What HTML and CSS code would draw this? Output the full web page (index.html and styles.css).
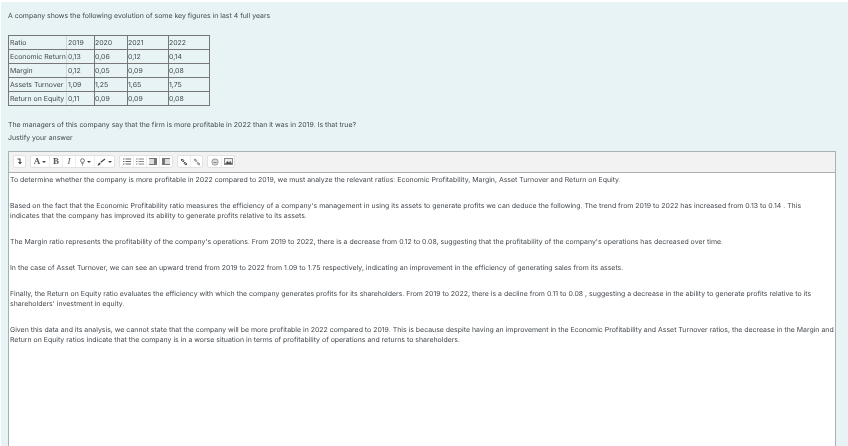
FILE: index.html
```html
<!DOCTYPE html>
<html lang="en">
    <head>
        <meta charset="UTF-8" />
        <title>Question</title>
        <link rel="stylesheet" href="styles.css">
    </head>
    <body>
        <div class="question">
            <p class="line intro">A company shows the following evolution of some key figures in last 4 full years</p>
            <table class="figures">
                <tr><td class="name">Ratio</td><td class="first">2019</td><td class="y20">2020</td><td class="y21">2021</td><td class="y22">2022</td></tr>
                <tr><td class="name">Economic Return</td><td class="first">0,13</td><td class="y20">0,06</td><td class="y21">0,12</td><td class="y22">0,14</td></tr>
                <tr><td class="name">Margin</td><td class="first">0,12</td><td class="y20">0,05</td><td class="y21">0,09</td><td class="y22">0,08</td></tr>
                <tr><td class="name">Assets Turnover</td><td class="first">1,09</td><td class="y20">1,25</td><td class="y21">1,65</td><td class="y22">1,75</td></tr>
                <tr><td class="name">Return on Equity</td><td class="first">0,11</td><td class="y20">0,09</td><td class="y21">0,09</td><td class="y22">0,08</td></tr>
            </table>
            <p class="line managers">The managers of this company say that the firm is more profitable in 2022 than it was in 2019. Is that true?</p>
            <p class="line justify">Justify your answer</p>
            <div class="editor">
                <div class="toolbar">
                    <div class="group">
                        <span class="tool solo"><svg width="5" height="7" viewBox="0 0 5 7"><path d="M.5 1H3v3.5" fill="none" stroke="#444" stroke-width="1.1"/><path d="M1 4h4L3 6.5z" fill="#444"/></svg></span>
                    </div>
                    <div class="group">
                        <span class="tool font"><b class="glyph">A</b><i class="caret"></i></span>
                        <span class="tool"><b class="glyph">B</b></span>
                        <span class="tool"><em class="glyph">I</em></span>
                        <span class="tool bulb"><svg width="5" height="8" viewBox="0 0 5 8"><circle cx="2.5" cy="2.6" r="1.9" fill="none" stroke="#666" stroke-width=".9"/><path d="M1.5 5.6h2M2 7h1" stroke="#666"/></svg><i class="caret"></i></span>
                        <span class="tool brush"><svg width="9" height="8" viewBox="0 0 9 8"><path d="M.5 7.500c1.500 0 2.800-.5 3-2L3 4.500c-1.500.3-1.800 1.600-2.500 3z" fill="#444"/><path d="M3.800 4.200L8 1" stroke="#444" stroke-width="1.300"/></svg><i class="caret"></i></span>
                    </div>
                    <div class="group">
                        <span class="tool"><svg width="8" height="7" viewBox="0 0 8 7"><path d="M0 1h1.500M0 3.500h1.500M0 6h1.500M2.500 1H8M2.500 3.500H8M2.500 6H8" stroke="#666"/></svg></span>
                        <span class="tool"><svg width="8" height="7" viewBox="0 0 8 7"><path d="M0 1h1.500M0 3.500h1.500M0 6h1.500M2.500 1H8M2.500 3.500H8M2.500 6H8" stroke="#888"/></svg></span>
                        <span class="tool"><svg width="8" height="7" viewBox="0 0 8 7"><path d="M0 0h8v7H0z" fill="#777"/><path d="M0 1h5v5H0z" fill="#ddd"/></svg></span>
                        <span class="tool"><svg width="8" height="7" viewBox="0 0 8 7"><path d="M0 0h8v7H0z" fill="#777"/><path d="M3 1h5v5H3z" fill="#ddd"/></svg></span>
                    </div>
                    <div class="group">
                        <span class="tool narrow"><svg width="8" height="8" viewBox="0 0 8 8"><path d="M1 2l1-1 2 1.500-1 1zM7 6L6 7 4 5.500l1-1z" fill="none" stroke="#555"/><path d="M3 3l2 2" stroke="#555"/></svg></span>
                        <span class="tool narrow"><svg width="8" height="8" viewBox="0 0 8 8"><path d="M1 2l1-1 2 1.500-1 1zM7 6L6 7 4 5.500l1-1z" fill="none" stroke="#999"/><path d="M1 .5l6 7" stroke="#888" stroke-width=".7"/></svg></span>
                    </div>
                    <div class="group">
                        <span class="tool"><svg width="8" height="8" viewBox="0 0 8 8"><circle cx="4" cy="4" r="3.500" fill="#999"/><circle cx="4" cy="4" r="2.600" fill="#ddd"/><path d="M2.300 4.500h3.400" stroke="#888"/></svg></span>
                        <span class="tool"><svg width="9" height="7" viewBox="0 0 9 7"><path d="M0 0h9v7H0z" fill="#888"/><path d="M1 1h7v4.500H1z" fill="#eee"/><path d="M1 6l2.500-3 1.500 1.500L6.500 3 8 6z" fill="#555"/></svg></span>
                    </div>
                </div>
                <div class="answer">
                    <p>To determine whether the company is more profitable in 2022 compared to 2019, we must analyze the relevant ratios: Economic Profitability, Margin, Asset Turnover and Return on Equity.</p>
                    <p>Based on the fact that the Economic Profitability ratio measures the efficiency of a company's management in using its assets to generate profits we can deduce the following. The trend from 2019 to 2022 has increased from 0.13 to 0.14 . This<br>indicates that the company has improved its ability to generate profits relative to its assets.</p>
                    <p>The Margin ratio represents the profitability of the company's operations. From 2019 to 2022, there is a decrease from 0.12 to 0.08, suggesting that the profitability of the company's operations has decreased over time.</p>
                    <p>In the case of Asset Turnover, we can see an upward trend from 2019 to 2022 from 1.09 to 1.75 respectively, indicating an improvement in the efficiency of generating sales from its assets.</p>
                    <p>Finally, the Return on Equity ratio evaluates the efficiency with which the company generates profits for its shareholders. From 2019 to 2022, there is a decline from 0.11 to 0.08 , suggesting a decrease in the ability to generate profits relative to its shareholders' investment in equity.</p>
                    <p>Given this data and its analysis, we cannot state that the company will be more profitable in 2022 compared to 2019. This is because despite having an improvement in the Economic Profitability and Asset Turnover ratios, the decrease in the Margin and Return on Equity ratios indicate that the company is in a worse situation in terms of profitability of operations and returns to shareholders.</p>
                </div>
            </div>
        </div>
    </body>
</html>
```

FILE: styles.css
```css
html, body {
    height: 100%;
    overflow: hidden;
}
body {
    margin: 0;
    background: #fff;
    font-family: Inter, "Liberation Sans", sans-serif;
    font-size: 6.95px;
    line-height: 13px;
    color: #44494e;
    text-rendering: geometricPrecision;
}
.question {
    margin: 2px 0 0 1px;
    padding: 6.5px 12px 0 7px;
    height: 444px;
    box-sizing: border-box;
    background: #e7f3f5;
}
/* own layers, so the small text gets grey antialiasing */
.question > * {
    will-change: transform;
}
.line {
    margin: 0;
}
.figures {
    margin: 13.5px 0 0 0;
    border-collapse: collapse;
    border: 1px solid #777;
    table-layout: fixed;
    width: 202px;
}
.figures td {
    padding: 0 1px 0 0;
    height: 12.7px;
    border-top: 1px solid #777;
    border-bottom: 1px solid #777;
    white-space: nowrap;
    overflow: hidden;
}
.figures .name { width: 55px; padding-left: 1px; }
.figures .first { width: 25px; padding-left: 1px; border-left: 1px solid #cfd8da; }
.y20 { width: 31px; border-left: 1px solid #777; }
.y21 { width: 39px; border-left: 1px solid #777; }
.y22 { border-left: 1px solid #777; }
.managers {
    margin-top: 12px;
}
.editor {
    margin-top: 7px;
    border: 1px solid #a9b1b5;
    background: #fff;
    height: 297px;
}
.toolbar {
    display: flex;
    gap: 4px;
    height: 21px;
    padding: 3px 0 0 4px;
    box-sizing: border-box;
    background: #f2f2f2;
    border-bottom: 1px solid #a9b1b5;
}
.group {
    display: flex;
    height: 13px;
    background: #fff;
    border: 1px solid #e2e2e2;
    border-radius: 2px;
    box-sizing: border-box;
}
.tool {
    display: flex;
    align-items: center;
    justify-content: center;
    gap: 2px;
    box-sizing: border-box;
    width: 13px;
    font-size: 9px;
    color: #555;
}
.tool + .tool {
    border-left: 1px solid #eee;
}
.tool.solo { width: 11px; }
.tool.narrow { width: 12px; }
.tool.font { width: 18px; }
.tool.bulb { width: 19px; }
.tool.brush { width: 20px; }
.glyph {
    font-family: "Liberation Serif", serif;
}
.caret {
    border-top: 2px solid #444;
    border-left: 2px solid transparent;
    border-right: 2px solid transparent;
}
.answer {
    padding: 2.4px 1px 0;
}
.answer p {
    margin: 0 0 15.5px;
    line-height: 10.3px;
}
```
